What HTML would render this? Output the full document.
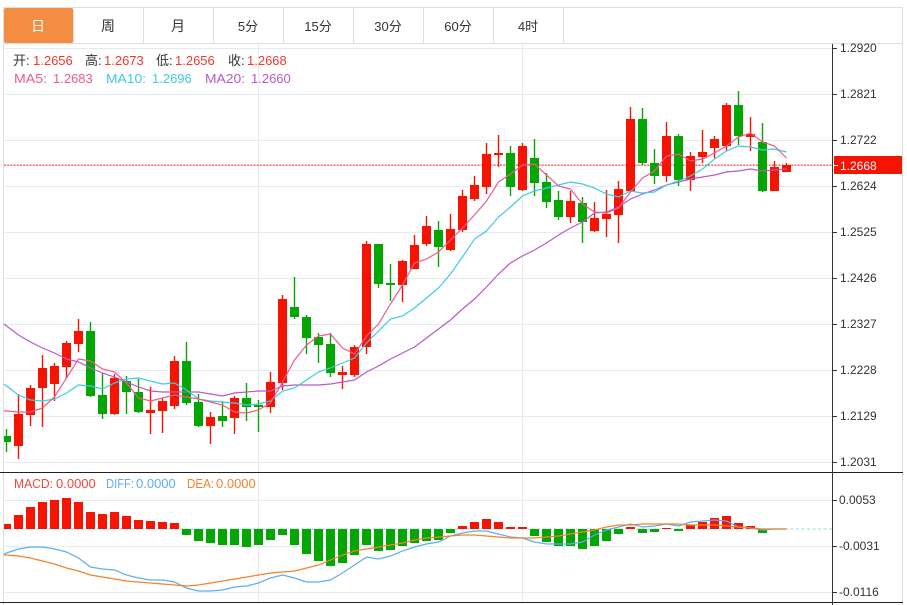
<!DOCTYPE html>
<html><head><meta charset="utf-8"><title>K线图</title>
<style>
html,body{margin:0;padding:0;background:#fff;width:907px;height:605px;overflow:hidden}
svg{display:block}
text{font-family:"Liberation Sans","Noto Sans CJK SC",sans-serif;font-size:13px}
.t{fill:#333;text-anchor:middle;font-size:13px}
.a{fill:#333;font-size:12px}
</style></head>
<body>
<svg width="907" height="605" viewBox="0 0 907 605" xmlns="http://www.w3.org/2000/svg">
<rect width="907" height="605" fill="#fff"/>
<!-- outer frame and tabs -->
<path d="M3 7.5H903M3.5 7V605M902.5 7V605M3 43.5H903" stroke="#dedede" fill="none"/>
<path d="M143.5 8V43M213.5 8V43M283.5 8V43M353.5 8V43M423.5 8V43M493.5 8V43M563.5 8V43M73.5 8V43" stroke="#dedede" fill="none"/>
<rect x="4" y="8" width="69" height="35" rx="2" fill="#f48c42"/>
<text x="38" y="31" class="t" style="fill:#fff;font-size:14px">日</text>
<text x="108" y="31" class="t" style="font-size:14px">周</text>
<text x="178" y="31" class="t" style="font-size:14px">月</text>
<text x="248" y="31" class="t">5分</text>
<text x="318" y="31" class="t">15分</text>
<text x="388" y="31" class="t">30分</text>
<text x="458" y="31" class="t">60分</text>
<text x="528" y="31" class="t">4时</text>
<!-- grid -->
<path d="M4 48.5H833M4 94.5H833M4 140.5H833M4 186.5H833M4 232.5H833M4 278.5H833M4 324.5H833M4 370.5H833M4 416.5H833M4 462.5H833M4 500.5H833M4 546.5H833M4 592.5H833M258.5 44V602M522.5 44V602" stroke="#e3ebf2" fill="none"/>
<path d="M4 165.2H833" stroke="#f4362c" stroke-width="1.4" stroke-dasharray="2 1.2" opacity=".85" fill="none"/>
<path d="M4 529H832" stroke="#a9e0ec" stroke-width="1.3" stroke-dasharray="3 2.5" fill="none"/>
<!-- candle wicks -->
<path d="M18.5 394V459M30.5 385V426M42.5 355V427M54.5 363V401M66.5 341V378M78.5 319V352M114.5 374V415M150.5 387V434M162.5 398V433M174.5 356V409M210.5 412V444M234.5 396V434M270.5 372V413M282.5 295V390M342.5 366V389M354.5 345V377M366.5 241V354M402.5 260V302M414.5 235V269M426.5 216V246M450.5 214V251M462.5 190V232M474.5 176V201M486.5 143V194M498.5 135V167M522.5 143V191M570.5 191V223M594.5 202V232M606.5 190V237M618.5 181V243M630.5 107V192M666.5 122V182M690.5 152V191M702.5 130V163M714.5 136V158M726.5 103V151M750.5 117V151M774.5 161V191M786.5 163V172" stroke="#f51401" stroke-width="1.4" fill="none"/>
<path d="M6.5 429V452M90.5 322V397M102.5 373V419M126.5 376V414M138.5 379V413M186.5 342V405M198.5 394V427M222.5 401V427M246.5 383V421M258.5 400V432M294.5 277V319M306.5 315V354M318.5 333V363M330.5 333V377M378.5 244V288M390.5 264V301M438.5 221V267M510.5 146V196M534.5 139V196M546.5 173V208M558.5 191V220M582.5 197V243M642.5 108V165M654.5 149V184M678.5 134V186M738.5 91V145M762.5 123V192" stroke="#03a602" stroke-width="1.4" fill="none"/>
<!-- candle bodies -->
<path fill="#f51401" d="M14 414h9v32h-9zM26 388h9v27h-9zM38 368h9v20h-9zM50 366h9v18h-9zM62 343h9v24h-9zM74 331h9v13h-9zM110 378h9v36h-9zM146 410h9v3h-9zM158 401h9v10h-9zM170 361h9v45h-9zM206 417h9v9h-9zM230 398h9v20h-9zM266 382h9v25h-9zM278 299h9v84h-9zM338 372h9v3h-9zM350 347h9v28h-9zM362 244h9v103h-9zM398 261h9v24h-9zM410 245h9v24h-9zM422 226h9v18h-9zM446 229h9v21h-9zM458 196h9v34h-9zM470 185h9v14h-9zM482 154h9v33h-9zM494 153h9v2h-9zM518 146h9v44h-9zM566 201h9v16h-9zM590 218h9v13h-9zM602 214h9v5h-9zM614 189h9v26h-9zM626 119h9v72h-9zM662 136h9v40h-9zM686 156h9v24h-9zM698 152h9v5h-9zM710 139h9v9h-9zM722 105h9v41h-9zM746 134h9v3h-9zM770 167h9v24h-9zM782 165h9v7h-9z"/>
<path fill="#03a602" d="M4 436h7v6h-7zM86 331h9v65h-9zM98 395h9v19h-9zM122 381h9v11h-9zM134 392h9v20h-9zM182 361h9v42h-9zM194 402h9v24h-9zM218 416h9v5h-9zM242 398h9v9h-9zM254 405h9v2h-9zM290 307h9v10h-9zM302 317h9v21h-9zM314 337h9v8h-9zM326 344h9v29h-9zM374 244h9v40h-9zM386 283h9v2h-9zM434 230h9v17h-9zM506 153h9v34h-9zM530 158h9v25h-9zM542 182h9v20h-9zM554 200h9v17h-9zM578 203h9v19h-9zM638 119h9v44h-9zM650 163h9v13h-9zM674 136h9v44h-9zM734 105h9v31h-9zM758 142h9v49h-9z"/>
<!-- MA lines -->
<polyline fill="none" stroke="#b85ac8" stroke-width="1.2" points="4,324 6.5,326 18.5,335 30.5,342 42.5,348 54.5,353 66.5,359 78.5,362 90.5,368 102.5,373 114.5,377 126.5,382 138.5,387 150.5,391 162.5,392 174.5,392 186.5,392 198.5,392 210.5,394 222.5,396 234.5,393 246.5,392 258.5,391 270.5,391 282.5,386 294.5,385 306.5,385 318.5,385 330.5,384 342.5,382 354.5,380 366.5,372 378.5,366 390.5,359 402.5,353 414.5,347 426.5,338 438.5,329 450.5,320 462.5,309 474.5,299 486.5,287 498.5,274 510.5,263 522.5,256 534.5,250 546.5,243 558.5,235 570.5,228 582.5,222 594.5,213 606.5,212 618.5,207 630.5,199 642.5,194 654.5,190 666.5,185 678.5,182 690.5,179 702.5,177 714.5,175 726.5,172 738.5,171 750.5,169 762.5,171 774.5,170 786.5,169"/>
<polyline fill="none" stroke="#3fcbe0" stroke-width="1.2" points="4,384 6.5,386 18.5,395 30.5,400 42.5,401 54.5,399 66.5,393 78.5,385 90.5,386 102.5,389 114.5,383 126.5,379 138.5,378 150.5,381 162.5,384 174.5,383 186.5,390 198.5,399 210.5,401 222.5,402 234.5,403 246.5,405 258.5,404 270.5,401 282.5,391 294.5,388 306.5,380 318.5,372 330.5,368 342.5,363 354.5,358 366.5,343 378.5,331 390.5,319 402.5,316 414.5,308 426.5,298 438.5,288 450.5,274 462.5,257 474.5,239 486.5,231 498.5,217 510.5,207 522.5,196 534.5,191 546.5,188 558.5,185 570.5,182 582.5,184 594.5,188 606.5,194 618.5,197 630.5,191 642.5,193 654.5,192 666.5,185 678.5,181 690.5,176 702.5,169 714.5,159 726.5,151 738.5,146 750.5,147 762.5,150 774.5,149 786.5,152"/>
<polyline fill="none" stroke="#ef5a8f" stroke-width="1.2" points="4,411 6.5,411 18.5,412 30.5,412 42.5,408 54.5,397 66.5,378 78.5,359 90.5,361 102.5,369 114.5,372 126.5,383 138.5,398 150.5,401 162.5,398 174.5,395 186.5,397 198.5,399 210.5,402 222.5,405 234.5,412 246.5,413 258.5,410 270.5,403 282.5,382 294.5,360 306.5,345 318.5,336 330.5,334 342.5,348 354.5,354 366.5,336 378.5,324 390.5,304 402.5,285 414.5,263 426.5,259 438.5,252 450.5,240 462.5,228 474.5,215 486.5,201 498.5,182 510.5,174 522.5,165 534.5,164 546.5,175 558.5,186 570.5,189 582.5,204 594.5,212 606.5,213 618.5,208 630.5,192 642.5,178 654.5,171 666.5,156 678.5,154 690.5,161 702.5,159 714.5,153 726.5,146 738.5,137 750.5,133 762.5,142 774.5,146 786.5,158"/>
<!-- price info -->
<text x="13" y="65" fill="#333">开:</text><text x="33" y="65" fill="#f2362b">1.2656</text>
<text x="85" y="65" fill="#333">高:</text><text x="104" y="65" fill="#f2362b">1.2673</text>
<text x="156" y="65" fill="#333">低:</text><text x="175" y="65" fill="#f2362b">1.2656</text>
<text x="228" y="65" fill="#333">收:</text><text x="247" y="65" fill="#f2362b">1.2668</text>
<text x="14" y="83" fill="#ef5a8f" textLength="33" lengthAdjust="spacingAndGlyphs">MA5:</text><text x="53" y="83" fill="#ef5a8f">1.2683</text>
<text x="106" y="83" fill="#3fcbe0" textLength="40" lengthAdjust="spacingAndGlyphs">MA10:</text><text x="152" y="83" fill="#3fcbe0">1.2696</text>
<text x="205" y="83" fill="#b85ac8" textLength="40" lengthAdjust="spacingAndGlyphs">MA20:</text><text x="251" y="83" fill="#b85ac8">1.2660</text>
<!-- MACD bars -->
<path fill="#f51401" d="M4 524h7v5h-7zM14 515h9v14h-9zM26 507h9v22h-9zM38 502h9v27h-9zM50 500h9v29h-9zM62 498h9v31h-9zM74 502h9v27h-9zM86 512h9v17h-9zM98 514h9v15h-9zM110 512h9v17h-9zM122 516h9v13h-9zM134 520h9v9h-9zM146 521h9v8h-9zM158 522h9v7h-9zM170 523h9v6h-9zM458 526h9v3h-9zM470 522h9v7h-9zM482 519h9v10h-9zM494 522h9v7h-9zM506 527h9v2h-9zM518 527h9v2h-9zM626 527h9v2h-9zM662 528h9v1h-9zM686 525h9v4h-9zM698 522h9v7h-9zM710 518h9v11h-9zM722 516h9v13h-9zM734 523h9v6h-9zM746 526h9v3h-9zM770 528.5h9v.5h-9z"/>
<path fill="#03a602" d="M182 529h9v6h-9zM194 529h9v12h-9zM206 529h9v14h-9zM218 529h9v16h-9zM230 529h9v16h-9zM242 529h9v18h-9zM254 529h9v16h-9zM266 529h9v11h-9zM278 529h9v6h-9zM290 529h9v16h-9zM302 529h9v25h-9zM314 529h9v32h-9zM326 529h9v37h-9zM338 529h9v34h-9zM350 529h9v26h-9zM362 529h9v16h-9zM374 529h9v22h-9zM386 529h9v21h-9zM398 529h9v17h-9zM410 529h9v14h-9zM422 529h9v12h-9zM434 529h9v11h-9zM446 529h9v4h-9zM530 529h9v7h-9zM542 529h9v13h-9zM554 529h9v17h-9zM566 529h9v17h-9zM578 529h9v20h-9zM590 529h9v17h-9zM602 529h9v12h-9zM614 529h9v5h-9zM638 529h9v4h-9zM650 529h9v3h-9zM674 529h9v2h-9zM758 529h9v4h-9z"/>
<!-- MACD lines -->
<polyline fill="none" stroke="#5daef0" stroke-width="1.2" points="4,554 6.5,553 18.5,549 30.5,547 42.5,547 54.5,549 66.5,552 78.5,558 90.5,567 102.5,569 114.5,570 126.5,575 138.5,578 150.5,580 162.5,580 174.5,582 186.5,588 198.5,591 210.5,591 222.5,590 234.5,587 246.5,586 258.5,583 270.5,578 282.5,575 294.5,578 306.5,582 318.5,582 330.5,580 342.5,573 354.5,565 366.5,557 378.5,559 390.5,556 402.5,551 414.5,547 426.5,544 438.5,542 450.5,536 462.5,533 474.5,531 486.5,531 498.5,534 510.5,537 522.5,538 534.5,542 546.5,544 558.5,544 570.5,544 582.5,542 594.5,535 606.5,530 618.5,527 630.5,524 642.5,527 654.5,526 666.5,524 678.5,526 690.5,522 702.5,521 714.5,520 726.5,521 738.5,527 750.5,528 762.5,530 774.5,529 786.5,529"/>
<polyline fill="none" stroke="#f5822e" stroke-width="1.2" points="4,555 6.5,555 18.5,556 30.5,558 42.5,561 54.5,564 66.5,568 78.5,571 90.5,575 102.5,577 114.5,579 126.5,581 138.5,582 150.5,583 162.5,584 174.5,585 186.5,586 198.5,585 210.5,583 222.5,581 234.5,579 246.5,577 258.5,575 270.5,573 282.5,572 294.5,571 306.5,568 318.5,565 330.5,560 342.5,555 354.5,551 366.5,549 378.5,547 390.5,545 402.5,543 414.5,540 426.5,538 438.5,537 450.5,536 462.5,535 474.5,535 486.5,536 498.5,537 510.5,538 522.5,538 534.5,538 546.5,537 558.5,536 570.5,534 582.5,532 594.5,530 606.5,527 618.5,525 630.5,525 642.5,524 654.5,524 666.5,524 678.5,524 690.5,525 702.5,525 714.5,525 726.5,526 738.5,527 750.5,528 762.5,529 774.5,529 786.5,529"/>
<text x="14" y="488" fill="#f0463c" textLength="39" lengthAdjust="spacingAndGlyphs">MACD:</text><text x="56" y="488" fill="#f0463c">0.0000</text>
<text x="106" y="488" fill="#5daef0" textLength="28" lengthAdjust="spacingAndGlyphs">DIFF:</text><text x="136" y="488" fill="#5daef0">0.0000</text>
<text x="187" y="488" fill="#f5822e" textLength="27" lengthAdjust="spacingAndGlyphs">DEA:</text><text x="216" y="488" fill="#f5822e">0.0000</text>
<!-- section dividers and axis -->
<path d="M0 472.5H903M0 602.5H903" stroke="#222" fill="none"/>
<path d="M832.5 44V605" stroke="#333" fill="none"/>
<path d="M833 48.5h4M833 94.5h4M833 140.5h4M833 186.5h4M833 232.5h4M833 278.5h4M833 324.5h4M833 370.5h4M833 416.5h4M833 462.5h4M833 500.5h4M833 546.5h4M833 592.5h4" stroke="#333" fill="none"/>
<rect x="834" y="156" width="68" height="18" fill="#f51401"/>
<path d="M834 165.5h4" stroke="#fff" fill="none"/>
<text x="840" y="170" class="a" style="fill:#fff">1.2668</text>
<text x="840" y="52" class="a">1.2920</text>
<text x="840" y="98" class="a">1.2821</text>
<text x="840" y="144" class="a">1.2722</text>
<text x="840" y="190" class="a">1.2624</text>
<text x="840" y="236" class="a">1.2525</text>
<text x="840" y="282" class="a">1.2426</text>
<text x="840" y="328" class="a">1.2327</text>
<text x="840" y="374" class="a">1.2228</text>
<text x="840" y="420" class="a">1.2129</text>
<text x="840" y="466" class="a">1.2031</text>
<text x="839" y="504" class="a">0.0053</text>
<text x="839" y="550" class="a">-0.0031</text>
<text x="839" y="596" class="a">-0.0116</text>
</svg>
</body></html>
